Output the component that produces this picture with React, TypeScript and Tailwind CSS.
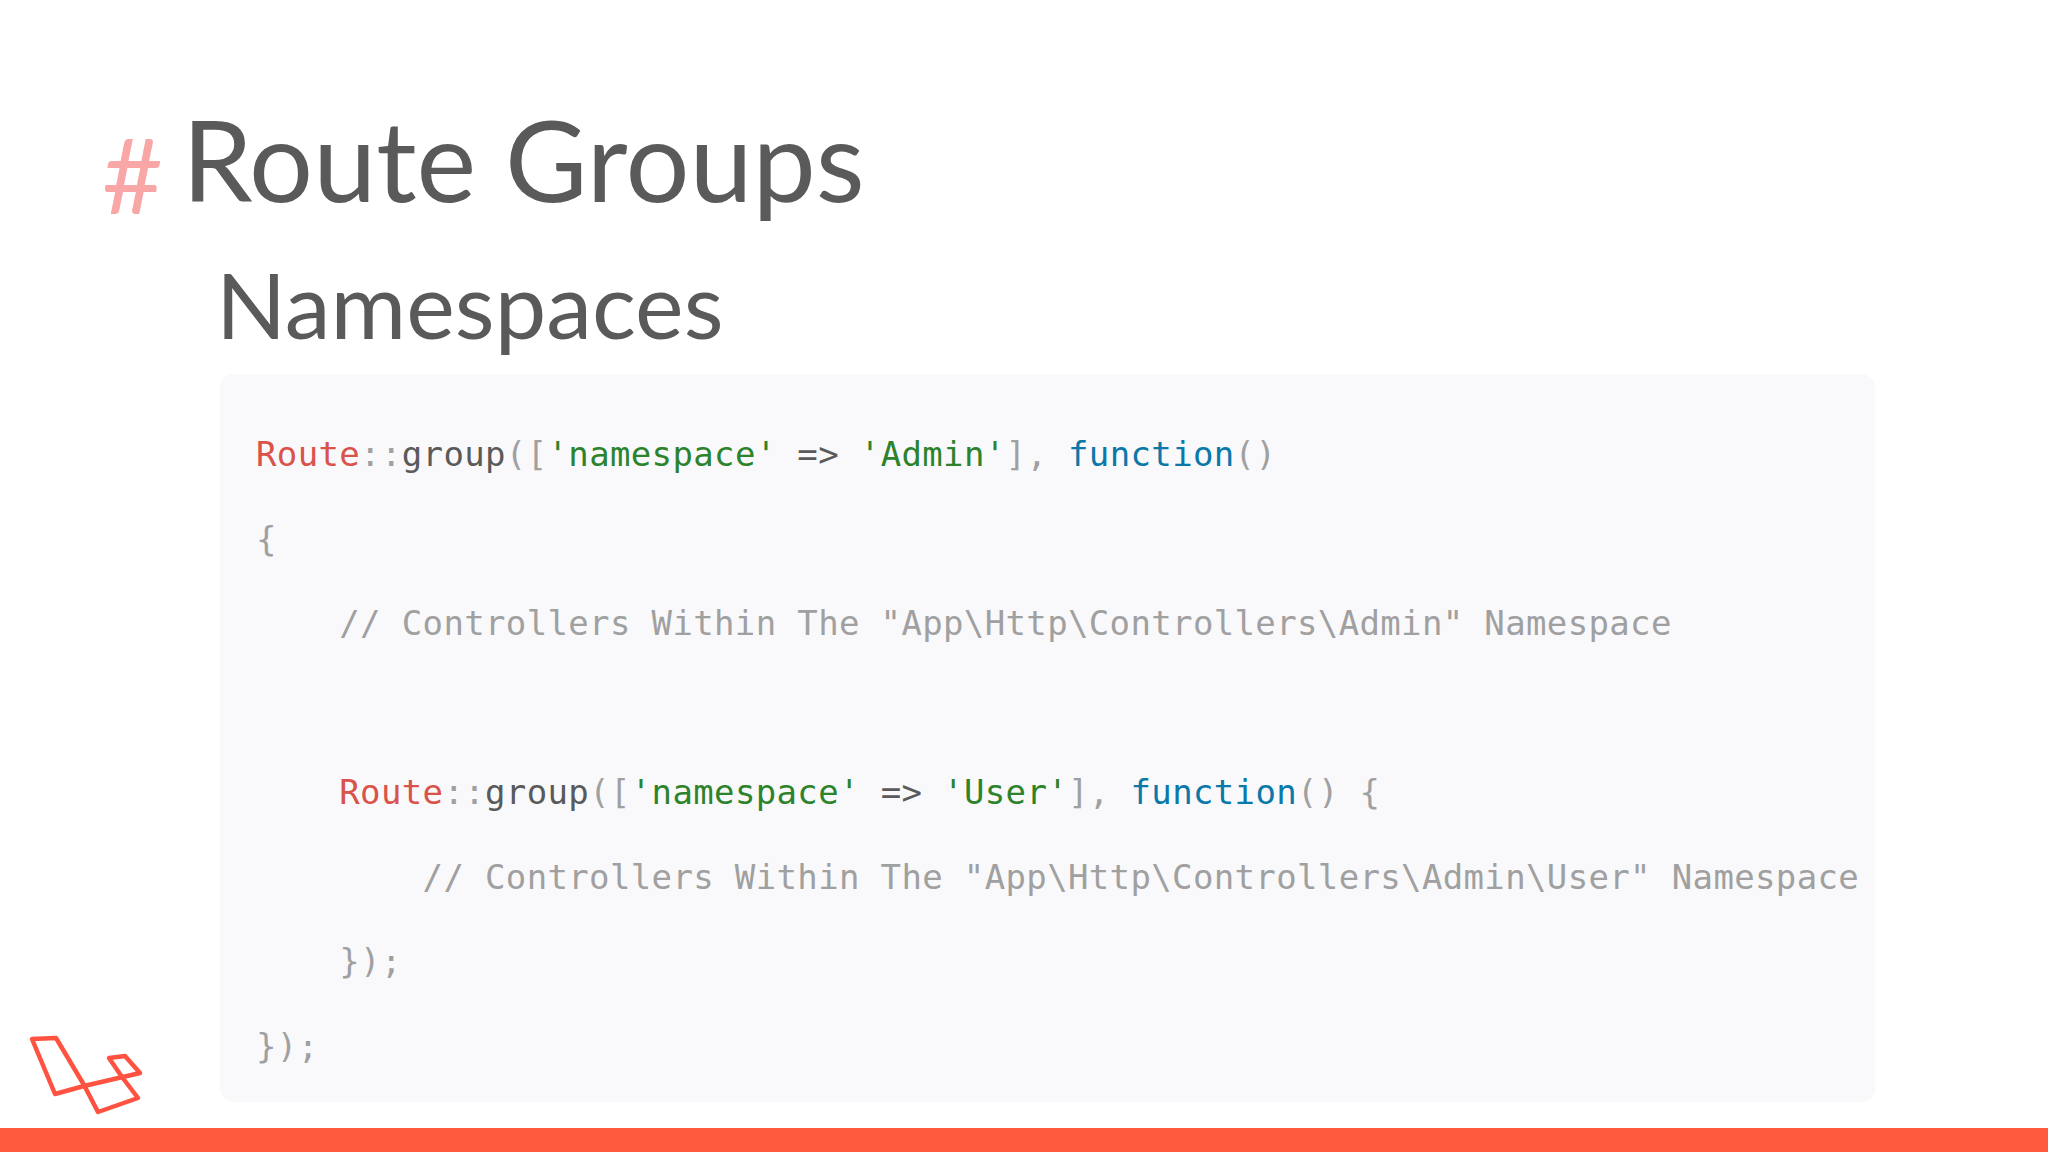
import React from 'react';

const RED = 'text-[#d9534a]';
const GREEN = 'text-[#2c832c]';
const BLUE = 'text-[#0a78a8]';
const GRAY = 'text-[#a0a0a0]';
const DARK = 'text-[#5a5a5a]';

const GroupCall = ({ name, tail }: { name: string; tail: string }) => (
  <>
    <span className={RED}>Route</span>
    <span className={GRAY}>::</span>
    <span className={DARK}>group</span>
    <span className={GRAY}>([</span>
    <span className={GREEN}>'namespace'</span>
    <span className={DARK}> =&gt; </span>
    <span className={GREEN}>'{name}'</span>
    <span className={GRAY}>], </span>
    <span className={BLUE}>function</span>
    <span className={GRAY}>{tail}</span>
  </>
);

export default function App() {
  return (
    <div className="relative flex h-[1152px] w-[2048px] flex-col overflow-hidden bg-white font-['Lato',sans-serif]">
      <div className="flex min-h-0 flex-1 flex-col pt-[98px]">
        <div className="flex items-start pl-[102px]">
          <span className="mt-[15px] w-[80px] text-[105px] leading-[120px] text-[#f9a6a6]">#</span>
          <h1 className="text-[113px] leading-[120px] font-normal text-[#5a5a5a]">Route Groups</h1>
        </div>
        <h2 className="mt-[16px] pl-[216px] text-[92px] leading-[110px] font-normal text-[#5a5a5a]">Namespaces</h2>
        <div className="mt-[15px] mr-[173px] ml-[220px] mb-[26px] min-h-0 flex-1 overflow-hidden rounded-[14px] bg-[#f9f9fb] pt-[38px] pl-[36px]">
          <pre className="font-['DejaVu_Sans_Mono',monospace] text-[34px] leading-[84.5px] tracking-[0.35px]">
            <div><GroupCall name="Admin" tail="()" /></div>
            <div className={GRAY}>{'{'}</div>
            <div className={GRAY}>{'    // Controllers Within The "App\\Http\\Controllers\\Admin" Namespace'}</div>
            <div>&nbsp;</div>
            <div>{'    '}<GroupCall name="User" tail="() {" /></div>
            <div className={GRAY}>{'        // Controllers Within The "App\\Http\\Controllers\\Admin\\User" Namespace'}</div>
            <div className={GRAY}>{'    });'}</div>
            <div className={GRAY}>{'});'}</div>
          </pre>
        </div>
      </div>
      <div className="h-6 shrink-0 bg-[#ff5a3e]" />
      <svg className="absolute top-[1030px] left-[24px]" width="125" height="92" viewBox="24 1030 125 92" fill="none" stroke="#ff5240" strokeWidth="4.5" strokeLinejoin="round">
        <path d="M32 1039 L56 1038 L84 1085 L98 1112 L138 1098 L122 1077 L109 1058 L125 1056 L140 1073 L84 1086 L55 1094 Z" />
      </svg>
    </div>
  );
}
